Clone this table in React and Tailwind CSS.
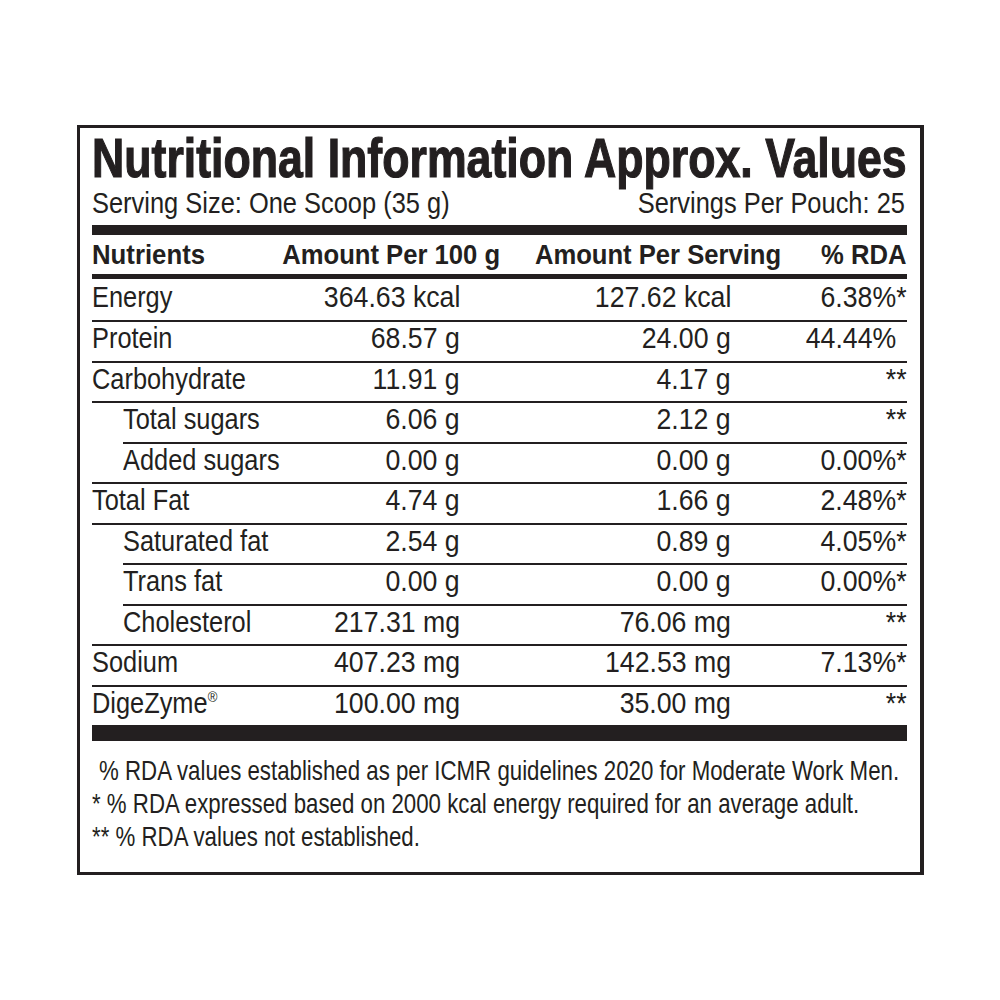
import React from 'react';

const rows = [
    { name: 'Energy', per100: '364.63 kcal', perServing: '127.62 kcal', rda: '6.38%*' },
    { name: 'Protein', per100: '68.57 g', perServing: '24.00 g', rda: '44.44%', pad: true },
    { name: 'Carbohydrate', per100: '11.91 g', perServing: '4.17 g', rda: '**' },
    { name: 'Total sugars', per100: '6.06 g', perServing: '2.12 g', rda: '**', sub: true },
    { name: 'Added sugars', per100: '0.00 g', perServing: '0.00 g', rda: '0.00%*', sub: true },
    { name: 'Total Fat', per100: '4.74 g', perServing: '1.66 g', rda: '2.48%*' },
    { name: 'Saturated fat', per100: '2.54 g', perServing: '0.89 g', rda: '4.05%*', sub: true },
    { name: 'Trans fat', per100: '0.00 g', perServing: '0.00 g', rda: '0.00%*', sub: true },
    { name: 'Cholesterol', per100: '217.31 mg', perServing: '76.06 mg', rda: '**', sub: true },
    { name: 'Sodium', per100: '407.23 mg', perServing: '142.53 mg', rda: '7.13%*' },
    { name: 'DigeZyme', reg: true, per100: '100.00 mg', perServing: '35.00 mg', rda: '**' },
];

const font = { fontFamily: "'Liberation Sans', Arial, sans-serif" };

// condensed look: the label face is a narrow grotesque, so squeeze Liberation Sans
const Left = ({ children, className = 'scale-x-[0.875]' }) => (
    <span className={`inline-block whitespace-nowrap origin-left ${className}`}>{children}</span>
);
const Right = ({ children, className = 'scale-x-[0.92]' }) => (
    <div className="flex justify-end">
        <span className={`inline-block whitespace-nowrap origin-right ${className}`}>{children}</span>
    </div>
);

const Cells = ({ row }) => (
    <>
        <div>
            <Left>
                {row.name}
                {row.reg && <sup className="text-[15px] align-[3px]">®</sup>}
            </Left>
        </div>
        <Right>{row.per100}</Right>
        <Right>{row.perServing}</Right>
        <Right>
            {row.rda}
            {row.pad && <span className="invisible">*</span>}
        </Right>
    </>
);

const Row = ({ row, first, indentLine }) => {
    if (first) {
        return (
            <div className="h-[41px] pt-[2px] grid grid-cols-[208px_160px_271px_176px] items-start leading-[32px]">
                <Cells row={row} />
            </div>
        );
    }
    if (indentLine) {
        return (
            <div className="h-[40.5px] ml-[31px] border-t-2 border-[#231f20] grid grid-cols-[177px_160px_271px_176px] items-start leading-[32px]">
                <Cells row={row} />
            </div>
        );
    }
    return (
        <div className={`h-[40.5px] border-t-2 border-[#231f20] grid grid-cols-[208px_160px_271px_176px] items-start leading-[32px] ${row.sub ? '[&>div:first-child]:pl-[31px]' : ''}`}>
            <Cells row={row} />
        </div>
    );
};

const App = () => {
    return (
        <div className="w-[1000px] h-[1000px] overflow-hidden bg-white pt-[125px] pl-[77px] text-[#231f20]" style={font}>
            <div className="w-[847px] h-[750px] border-[3px] border-r-4 border-[#231f20] pl-[12px] pr-[13px]">
                <div className="mt-[3px] h-[54px] leading-[54px] text-[55px] font-bold [-webkit-text-stroke:1.2px_#231f20]">
                    <Left className="scale-x-[0.812]">Nutritional Information Approx. Values</Left>
                </div>
                <div className="mt-[3px] h-[30px] leading-[30px] text-[29px] flex justify-between">
                    <Left className="scale-x-[0.877]">Serving Size: One Scoop (35 g)</Left>
                    <span className="inline-block whitespace-nowrap origin-right scale-x-[0.877] pr-[2px]">Servings Per Pouch: 25</span>
                </div>
                <div className="mt-[7px] h-[10px] bg-[#231f20]" />
                <div className="h-[39px] grid grid-cols-[208px_200px_281px_126px] items-center text-[28px] font-bold leading-[39px]">
                    <div>
                        <Left className="scale-x-[0.92]">Nutrients</Left>
                    </div>
                    <Right className="scale-x-[0.915]">Amount Per 100 g</Right>
                    <Right className="scale-x-[0.915]">Amount Per Serving</Right>
                    <Right className="scale-x-[0.915] pr-[1px]">% RDA</Right>
                </div>
                <div className="h-[5px] bg-[#231f20]" />
                <div className="text-[29px]">
                    {rows.map((row, i) => (
                        <Row
                            key={row.name}
                            row={row}
                            first={i === 0}
                            indentLine={row.sub && rows[i - 1]?.sub}
                        />
                    ))}
                </div>
                <div className="h-[16px] bg-[#231f20]" />
                <div className="mt-[13px] text-[28px] leading-[33px]">
                    <p className="pl-[7px]">
                        <Left className="scale-x-[0.795]">% RDA values established as per ICMR guidelines 2020 for Moderate Work Men.</Left>
                    </p>
                    <p>
                        <Left className="scale-x-[0.795]">* % RDA expressed based on 2000 kcal energy required for an average adult.</Left>
                    </p>
                    <p>
                        <Left className="scale-x-[0.795]">** % RDA values not established.</Left>
                    </p>
                </div>
            </div>
        </div>
    );
};

export default App;
